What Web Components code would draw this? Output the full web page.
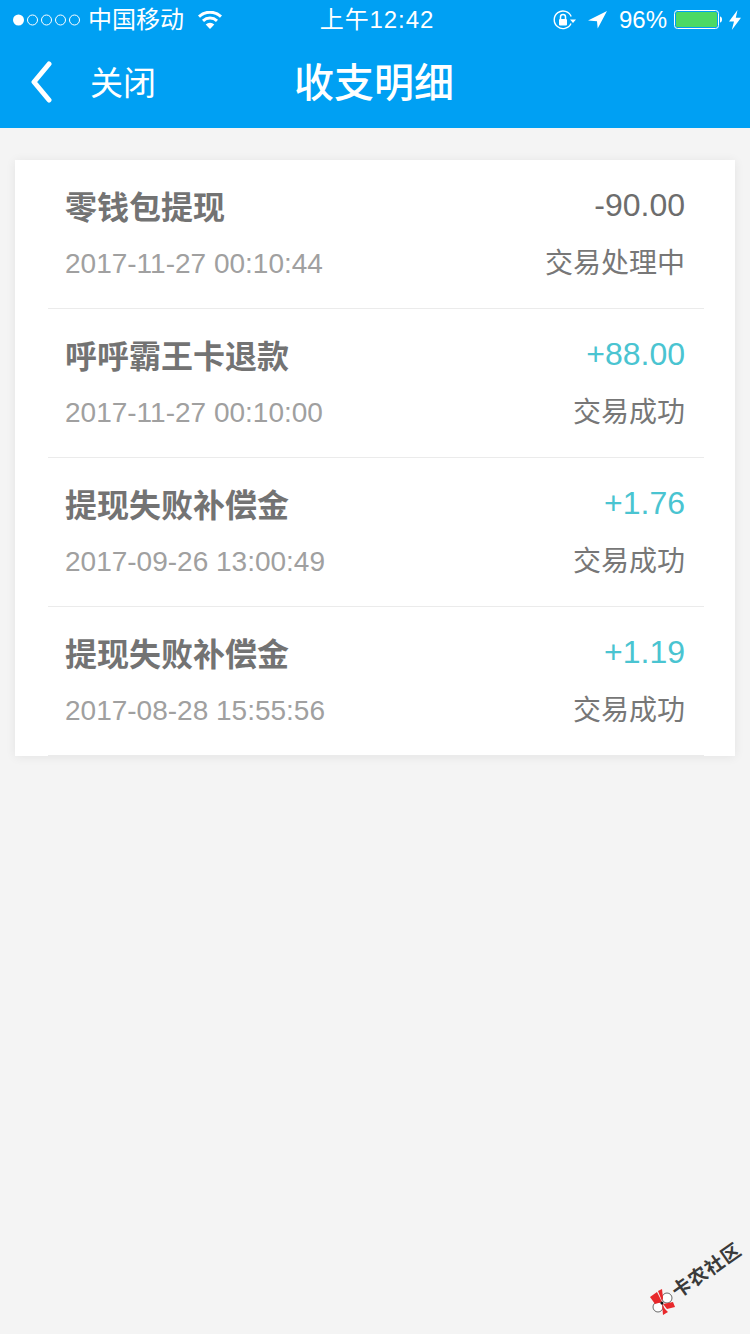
<!DOCTYPE html>
<html lang="zh-CN">
<head>
<meta charset="utf-8">
<title>收支明细</title>
<style>
  html, body {
    margin: 0;
    padding: 0;
    background: #f4f4f4;
    font-family: "Liberation Sans", "Noto Sans CJK SC", sans-serif;
  }
  body {
    min-height: 1334px;
    position: relative;
  }
</style>
</head>
<body>
<app-header>
  <span slot="carrier">中国移动</span>
  <span slot="time">上午12:42</span>
  <span slot="battery">96%</span>
  <span slot="back">关闭</span>
  <span slot="title">收支明细</span>
</app-header>

<tx-list>
  <tx-row>
    <span slot="name">零钱包提现</span>
    <span slot="amount">-90.00</span>
    <span slot="date">2017-11-27 00:10:44</span>
    <span slot="status">交易处理中</span>
  </tx-row>
  <tx-row income>
    <span slot="name">呼呼霸王卡退款</span>
    <span slot="amount">+88.00</span>
    <span slot="date">2017-11-27 00:10:00</span>
    <span slot="status">交易成功</span>
  </tx-row>
  <tx-row income>
    <span slot="name">提现失败补偿金</span>
    <span slot="amount">+1.76</span>
    <span slot="date">2017-09-26 13:00:49</span>
    <span slot="status">交易成功</span>
  </tx-row>
  <tx-row income>
    <span slot="name">提现失败补偿金</span>
    <span slot="amount">+1.19</span>
    <span slot="date">2017-08-28 15:55:56</span>
    <span slot="status">交易成功</span>
  </tx-row>
</tx-list>

<app-watermark>卡农社区</app-watermark>

<script>
class AppHeader extends HTMLElement {
  constructor() {
    super()
    this.attachShadow({ mode: 'open' })
    this.shadowRoot.innerHTML = `
      <style>
        :host {
          display: block;
          background: #00a0f3;
          color: #fff;
        }
        .status {
          height: 40px;
          display: grid;
          grid-template-columns: 1fr auto 1fr;
          align-items: center;
          padding: 0 9px 0 13px;
          font-size: 24px;
          line-height: 40px;
        }
        .left, .right {
          display: flex;
          align-items: center;
        }
        .right { justify-content: flex-end; }
        .left svg, .right svg { display: block; flex: none; }
        .carrier { margin-left: 7px; }
        .wifi { margin-left: 14px; }
        .time { letter-spacing: 0.9px; }
        .lock { margin-right: 11px; }
        .arrow { margin-right: 12px; }
        .batt { margin-right: 7px; }
        .bat { margin-right: 7px; }
        .nav {
          height: 88px;
          display: grid;
          grid-template-columns: 1fr auto 1fr;
          align-items: center;
          padding: 0 2px 2px 0;
          box-sizing: border-box;
        }
        .back {
          display: flex;
          align-items: center;
          padding-left: 29px;
          font-size: 33px;
          line-height: 44px;
        }
        .back svg { display: block; margin: 0 36px 2px 0; }
        .back span { padding-top: 1px; }
        .title {
          font-size: 40px;
          line-height: 50px;
          font-weight: 500;
        }
      </style>
      <div class="status">
        <div class="left">
          <svg width="68" height="14" viewBox="0 0 68 14">
            <circle cx="5.5" cy="7" r="5.5" fill="#fff"/>
            <g fill="none" stroke="#fff" stroke-width="1">
              <circle cx="19.5" cy="7" r="5"/>
              <circle cx="33.5" cy="7" r="5"/>
              <circle cx="47.5" cy="7" r="5"/>
              <circle cx="61.5" cy="7" r="5"/>
            </g>
          </svg>
          <span class="carrier"><slot name="carrier"></slot></span>
          <svg class="wifi" width="24" height="18" viewBox="0 0 24 18">
            <g fill="none" stroke="#fff" stroke-width="3">
              <path d="M1 5.600a16 16 0 0 1 22 0"/>
              <path d="M5 9.800a10.400 10.400 0 0 1 14 0"/>
            </g>
            <path d="M12 18l-4.300-4.600a6.200 6.200 0 0 1 8.600 0z" fill="#fff"/>
          </svg>
        </div>
        <div class="time"><slot name="time"></slot></div>
        <div class="right">
          <svg class="lock" width="24" height="22" viewBox="0 0 24 22">
            <path d="M18 14.500A8.800 8.800 0 1 1 18.200 7.500" fill="none" stroke="#fff" stroke-width="1.400"/>
            <path d="M17 10.500h6l-3 3.500z" fill="#fff"/>
            <rect x="6" y="10" width="8" height="6.500" rx="1" fill="#fff"/>
            <path d="M7.500 10V8a2.500 2.500 0 0 1 5 0v2" fill="none" stroke="#fff" stroke-width="1.500"/>
          </svg>
          <svg class="arrow" width="19" height="18" viewBox="0 0 19 18">
            <path d="M19 0L0 9.500l9 .8.700 7.200z" fill="#fff"/>
          </svg>
          <span class="batt"><slot name="battery"></slot></span>
          <svg class="bat" width="48" height="20" viewBox="0 0 48 20">
            <rect x=".5" y=".5" width="44" height="18" rx="3" fill="none" stroke="#fff"/>
            <rect x="2" y="2" width="41" height="15" rx="1.500" fill="#4cd964"/>
            <path d="M46 6.500c1.400.2 2 1.300 2 3s-.6 2.800-2 3z" fill="#fff"/>
          </svg>
          <svg width="12" height="20" viewBox="0 0 12 20">
            <path d="M8.500 0L0 11.500h5L2.800 20 12 7.800H6.800z" fill="#fff"/>
          </svg>
        </div>
      </div>
      <div class="nav">
        <div class="back">
          <svg width="25" height="42" viewBox="0 0 25 42">
            <path d="M20 3L5 21l15 18" fill="none" stroke="#fff" stroke-width="5" stroke-linecap="round" stroke-linejoin="round"/>
          </svg>
          <span><slot name="back"></slot></span>
        </div>
        <div class="title"><slot name="title"></slot></div>
        <div></div>
      </div>
    `
  }
}
customElements.define('app-header', AppHeader)

class TxList extends HTMLElement {
  constructor() {
    super()
    this.attachShadow({ mode: 'open' })
    this.shadowRoot.innerHTML = `
      <style>
        :host {
          display: block;
          margin: 32px 15px 0;
          background: #fff;
          box-shadow: 0 1px 10px rgba(0,0,0,0.07);
        }
      </style>
      <slot></slot>
    `
  }
}
customElements.define('tx-list', TxList)

class TxRow extends HTMLElement {
  constructor() {
    super()
    this.attachShadow({ mode: 'open' })
    this.shadowRoot.innerHTML = `
      <style>
        :host {
          display: block;
          margin: 0 31px 0 33px;
          padding: 28px 19px 24px 17px;
          border-bottom: 1px solid #ebebeb;
        }
        .line {
          display: flex;
          justify-content: space-between;
          align-items: center;
          line-height: 40px;
        }
        .line + .line { margin-top: 16px; }
        .name {
          font-size: 32px;
          font-weight: 700;
          color: #737373;
        }
        .amount {
          font-size: 32px;
          color: #6d6d6d;
          position: relative;
          top: -3px;
        }
        :host([income]) .amount { color: #4ac4d1; }
        .date {
          font-size: 28px;
          color: #a0a0a0;
        }
        .status {
          font-size: 28px;
          color: #777;
        }
      </style>
      <div class="line">
        <div class="name"><slot name="name"></slot></div>
        <div class="amount"><slot name="amount"></slot></div>
      </div>
      <div class="line">
        <div class="date"><slot name="date"></slot></div>
        <div class="status"><slot name="status"></slot></div>
      </div>
    `
  }
}
customElements.define('tx-row', TxRow)

// floats over the page corner
class AppWatermark extends HTMLElement {
  constructor() {
    super()
    this.attachShadow({ mode: 'open' })
    this.shadowRoot.innerHTML = `
      <style>
        :host {
          position: absolute;
          left: 645px;
          top: 1240px;
          width: 105px;
          height: 80px;
          display: block;
          font-size: 19px;
          font-weight: 700;
          letter-spacing: 1px;
          line-height: 24px;
          color: #3a3a3a;
          white-space: nowrap;
        }
        svg {
          position: absolute;
          left: 0;
          top: 44px;
        }
        .text {
          position: absolute;
          left: 61.5px;
          top: 30.5px;
          transform: translate(-50%, -50%) rotate(-35deg);
        }
      </style>
      <svg width="36" height="36" viewBox="0 0 36 36">
        <circle cx="22" cy="14" r="5" fill="#fff" stroke="#444" stroke-width=".8"/>
        <circle cx="13" cy="23" r="5" fill="#fff" stroke="#444" stroke-width=".8"/>
        <path d="M5 13l7-5 5 10-7 2z" fill="#e8282b"/>
        <path d="M13 7l4-2 1 9-1 3z" fill="#e8282b"/>
        <path d="M18 20l10-2 2 5-8 2z" fill="#e8282b"/>
        <path d="M17 20l3 5 3 3-5 3z" fill="#e8282b"/>
        <circle cx="17" cy="19" r="1.500" fill="#111"/>
      </svg>
      <span class="text"><slot></slot></span>
    `
  }
}
customElements.define('app-watermark', AppWatermark)
</script>
</body>
</html>
